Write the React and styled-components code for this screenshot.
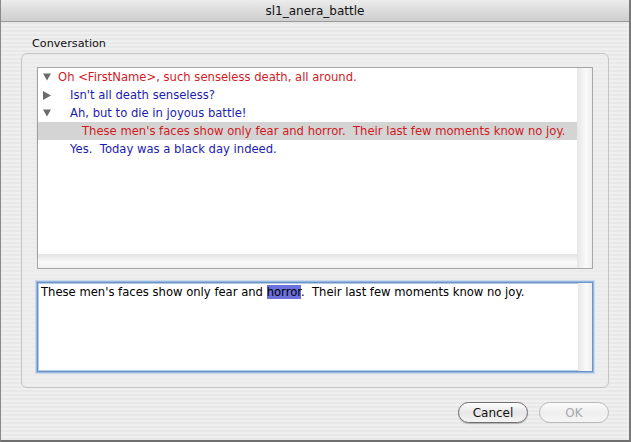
import React from "react";
import styled, { createGlobalStyle } from "styled-components";

const Global = createGlobalStyle`
    html, body {
        margin: 0;
        padding: 0;
        width: 631px;
        height: 442px;
        overflow: hidden;
    }
    body {
        font-family: "DejaVu Sans", "Liberation Sans", sans-serif;
    }
`

const Window = styled.div`
    width: 631px;
    height: 442px;
    box-sizing: border-box;
    display: flex;
    flex-direction: column;
    border-left: 1px solid #8a8a8a;
    border-right: 2px solid #7a7a7a;
    border-bottom: 2px solid #6f6f6f;
    background: repeating-linear-gradient(
        to bottom,
        #efefef 0px,
        #efefef 2px,
        #e8e8e8 2px,
        #e8e8e8 4px
    );
`

const TitleBar = styled.div`
    height: 21px;
    flex-shrink: 0;
    display: flex;
    align-items: center;
    justify-content: center;
    background: linear-gradient(to bottom, #ececec 0%, #dcdcdc 50%, #cfcfcf 100%);
    border-bottom: 1px solid #9a9a9a;
    font-size: 12px;
    color: #111;
`

const Body = styled.div`
    flex: 1;
    display: flex;
    flex-direction: column;
    padding: 15px 20px 0 20px;
`

const GroupLabel = styled.div`
    font-size: 11.2px;
    color: #111;
    padding-left: 11px;
    height: 16px;
    line-height: 14px;
`

const GroupBox = styled.div`
    height: 335px;
    box-sizing: border-box;
    border: 1px solid #c4c4c4;
    border-radius: 6px;
    background: rgba(236, 236, 236, 0.55);
    padding: 13px 15px 15px 15px;
    display: flex;
    flex-direction: column;
    gap: 13px;
`

const TreeFrame = styled.div`
    height: 202px;
    flex-shrink: 0;
    box-sizing: border-box;
    border: 1px solid #a8a8a8;
    display: grid;
    grid-template-columns: 1fr 15px;
    grid-template-rows: 1fr 14px;
    background: #f4f4f4;
`

const TreeList = styled.div`
    background: #fff;
    overflow: hidden;
    box-shadow: 0 2px 3px rgba(0, 0, 0, 0.12);
`

const VTrack = styled.div`
    background: linear-gradient(to right, #e6e6e6, #fafafa 60%, #eeeeee);
`

const HTrack = styled.div`
    background: linear-gradient(to bottom, #e2e2e2, #fafafa 60%, #f0f0f0);
`

const Row = styled.div`
    height: 18px;
    display: flex;
    align-items: center;
    background: ${p => p.$selected ? "#d4d4d4" : "transparent"};
    font-size: 11.6px;
    white-space: pre;
    color: ${p => p.$red ? "#d11a1f" : "#1c1cae"};
`

const Arrow = styled.span`
    width: 8px;
    flex-shrink: 0;
    margin-left: 5px;
    display: inline-flex;
    justify-content: center;
    svg { display: block; }
`

const RowText = styled.span`
    margin-left: ${p => p.$gap}px;
`

const EditFrame = styled.div`
    height: 90px;
    flex-shrink: 0;
    box-sizing: border-box;
    border: 1px solid #6c93c6;
    box-shadow: 0 0 0 1px #98b8dd, 0 0 0 2px #c9daee, inset 0 0 0 1px #b2cbe7;
    display: grid;
    grid-template-columns: 1fr 14px;
    background: #fff;
`

const EditText = styled.div`
    padding: 2px 3px;
    font-size: 11.6px;
    line-height: 15px;
    color: #000;
    white-space: pre;
    overflow: hidden;
`

const Sel = styled.span`
    background: #6b70dc;
`

const ButtonRow = styled.div`
    display: flex;
    justify-content: flex-end;
    gap: 11px;
    padding-top: 14px;
`

const Button = styled.button`
    width: 70px;
    height: 21px;
    box-sizing: border-box;
    border-radius: 11px;
    border: 1px solid ${p => p.disabled ? "#b8b8b8" : "#6e6e6e"};
    background: ${p => p.disabled
        ? "linear-gradient(to bottom, #fbfbfb, #efefef 50%, #f5f5f5)"
        : "linear-gradient(to bottom, #ffffff, #e6e6e6 50%, #f4f4f4)"};
    box-shadow: ${p => p.disabled ? "none" : "0 1px 1px rgba(0,0,0,0.25)"};
    font-family: "DejaVu Sans", "Liberation Sans", sans-serif;
    font-size: 12px;
    color: ${p => p.disabled ? "#a8a8a8" : "#111"};
    padding: 0;
`

const Down = () => (
    <svg width="9" height="8" viewBox="0 0 9 8"><polygon points="0,0 9,0 4.5,8" fill="#6c6c6c" /></svg>
);
const Right = () => (
    <svg width="8" height="9" viewBox="0 0 8 9"><polygon points="0,0 8,4.5 0,9" fill="#6c6c6c" /></svg>
);

const rows = [
    { arrow: "down", gap: 7, red: true, text: "Oh <FirstName>, such senseless death, all around." },
    { arrow: "right", gap: 19, text: "Isn't all death senseless?" },
    { arrow: "down", gap: 19, text: "Ah, but to die in joyous battle!" },
    { gap: 31, red: true, selected: true, text: "These men's faces show only fear and horror.  Their last few moments know no joy." },
    { gap: 19, text: "Yes.  Today was a black day indeed." },
];

const App = () => {
    return (
        <Window>
            <Global />
            <TitleBar>sl1_anera_battle</TitleBar>
            <Body>
                <GroupLabel>Conversation</GroupLabel>
                <GroupBox>
                    <TreeFrame>
                        <TreeList>
                            {rows.map((r, i) => (
                                <Row key={i} $red={r.red} $selected={r.selected}>
                                    <Arrow>
                                        {r.arrow === "down" && <Down />}
                                        {r.arrow === "right" && <Right />}
                                    </Arrow>
                                    <RowText $gap={r.gap}>{r.text}</RowText>
                                </Row>
                            ))}
                        </TreeList>
                        <VTrack />
                        <HTrack />
                        <VTrack />
                    </TreeFrame>
                    <EditFrame>
                        <EditText>
                            These men's faces show only fear and <Sel>horror</Sel>{".  Their last few moments know no joy."}
                        </EditText>
                        <VTrack />
                    </EditFrame>
                </GroupBox>
                <ButtonRow>
                    <Button>Cancel</Button>
                    <Button disabled>OK</Button>
                </ButtonRow>
            </Body>
        </Window>
    );
};

export default App;
